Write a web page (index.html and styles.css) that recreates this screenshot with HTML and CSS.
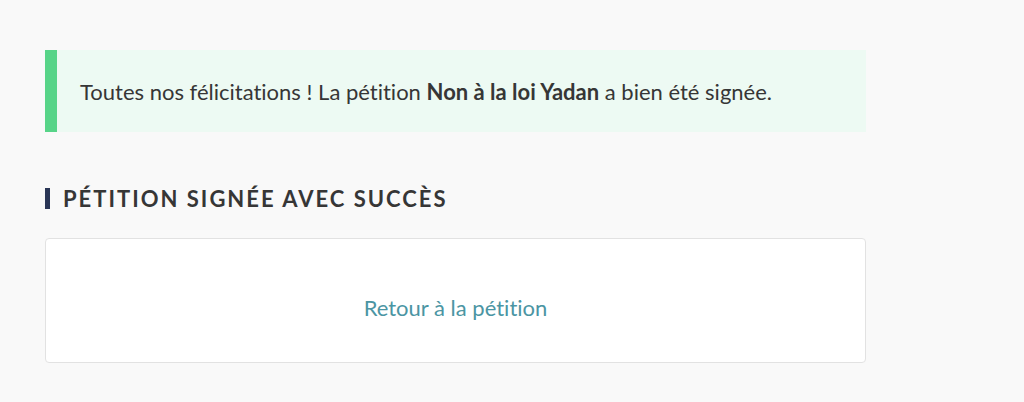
FILE: index.html
```html
<!DOCTYPE html>
<html lang="fr">
<head>
<meta charset="utf-8">
<title>Pétition signée</title>
<link rel="stylesheet" href="styles.css">
</head>
<body>
<main class="page">
  <div class="alert">
    <p>Toutes nos félicitations ! La pétition <strong>Non à la loi Yadan</strong> a bien été signée.</p>
  </div>
  <h2 class="section-title">Pétition signée avec succès</h2>
  <div class="card">
    <a class="back-link" href="#">Retour à la pétition</a>
  </div>
</main>
</body>
</html>
```
FILE: styles.css
```css
html, body {
  margin: 0;
  background: #f9f9f9;
}
body {
  font-family: "Lato", "Open Sans", sans-serif;
  color: #363636;
  font-variant-ligatures: no-common-ligatures;
}
.page {
  width: 821px;
  padding: 50px 0 0 45px;
}
.alert {
  background: #edfaf3;
  border-left: 12px solid #57d488;
  height: 82px;
  box-sizing: border-box;
  display: flex;
  align-items: center;
  padding-left: 23px;
}
.alert p {
  margin: 0;
  font-size: 22px;
  color: #363636;
}
.alert strong {
  font-weight: 700;
}
.section-title {
  margin: 56px 0 0;
  height: 21px;
  display: flex;
  align-items: center;
  font-size: 22px;
  font-weight: 700;
  text-transform: uppercase;
  letter-spacing: 2px;
  color: #363636;
  border-left: 5px solid #2a3656;
  padding-left: 13px;
}
.card {
  margin-top: 29px;
  background: #fff;
  border: 1px solid #e2e2e2;
  border-radius: 4px;
  height: 125px;
  box-sizing: border-box;
  display: flex;
  align-items: center;
  justify-content: center;
  padding-top: 14px;
}
.back-link {
  font-size: 22px;
  color: #4b95a3;
  text-decoration: none;
}
```
